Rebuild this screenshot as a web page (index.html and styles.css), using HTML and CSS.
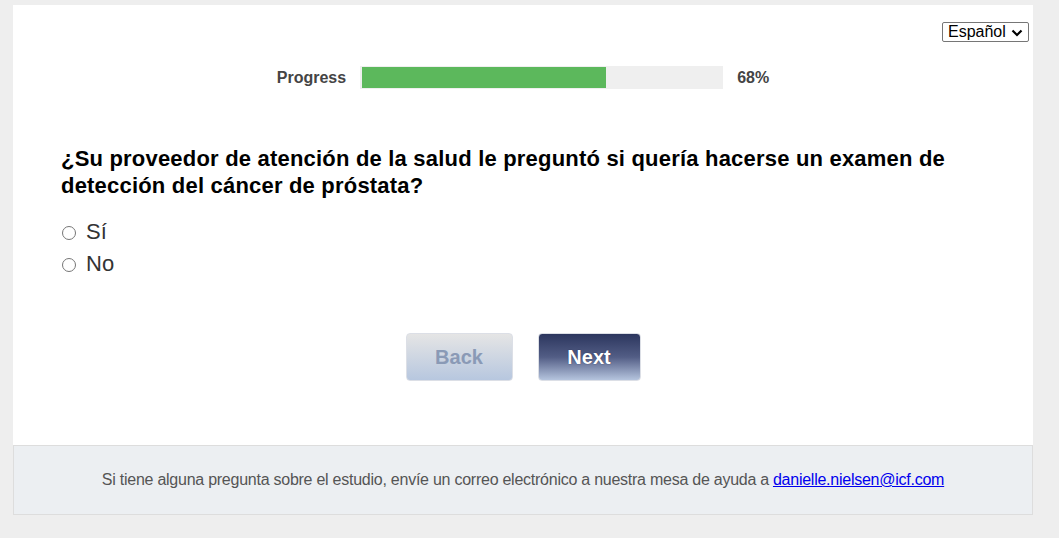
FILE: index.html
```html
<!DOCTYPE html>
<html lang="es">
<head>
<meta charset="UTF-8">
<meta name="viewport" content="width=device-width, initial-scale=1.0">
<title>Encuesta</title>
<link rel="stylesheet" href="styles.css">
</head>
<body>

<div class="survey">
  <div class="lang-row">
    <div class="lang-wrap">
      <select class="lang" name="lang">
        <option value="es">Español</option>
        <option value="en">English</option>
      </select>
      <svg class="lang-arrow" width="12" height="8" viewBox="0 0 12 8"><path d="M1.5 1.5 6 6 10.5 1.5" fill="none" stroke="#000" stroke-width="2.2"/></svg>
    </div>
  </div>

  <div class="progress">
    <span class="progress-label">Progress</span>
    <div class="progress-track">
      <div class="progress-fill" style="width: 68%"></div>
    </div>
    <span class="progress-label">68%</span>
  </div>

  <form class="question">
    <h2>¿Su proveedor de atención de la salud le preguntó si quería hacerse un examen de detección del cáncer de próstata?</h2>
    <label class="option"><input type="radio" name="q1" value="1"> Sí</label>
    <label class="option"><input type="radio" name="q1" value="2"> No</label>

    <div class="buttons">
      <button type="button" class="btn btn-back">Back</button>
      <button type="submit" class="btn btn-next">Next</button>
    </div>
  </form>
</div>

<div class="footer">
  Si tiene alguna pregunta sobre el estudio, envíe un correo electrónico a nuestra mesa de ayuda a <a href="mailto:danielle.nielsen@icf.com">danielle.nielsen@icf.com</a>
</div>

</body>
</html>
```

FILE: styles.css
```css
body {
  font-family: "Liberation Sans", Arial, sans-serif;
  margin: 0;
  padding: 5px 0 0 13px;
  background-color: #eeeeee;
}
.survey {
  width: 1020px;
  background-color: #fff;
  padding: 17px 0 64px;
  box-sizing: border-box;
}
.lang-row {
  display: flex;
  justify-content: flex-end;
  padding-right: 4px;
}
.lang-wrap {
  position: relative;
  height: 20px;
}
.lang {
  -webkit-appearance: none;
  appearance: none;
  font-family: "Liberation Sans", Arial, sans-serif;
  font-size: 16px;
  height: 20px;
  width: 87px;
  padding: 0 0 0 5px;
  border: 1px solid #767676;
  border-radius: 2px;
  background: #fff;
  color: #000;
  line-height: 18px;
}
.lang-arrow {
  position: absolute;
  right: 6px;
  top: 7px;
  pointer-events: none;
}
.progress {
  display: flex;
  justify-content: center;
  align-items: center;
  gap: 14px;
  margin-top: 24px;
}
.progress-label {
  font-size: 16px;
  font-weight: bold;
  color: #444;
}
.progress-track {
  width: 363px;
  height: 23px;
  background-color: #efefef;
  padding: 1px 2px;
  box-sizing: border-box;
}
.progress-fill {
  height: 100%;
  background-color: #5cb85c;
}
.question {
  margin: 56px 0 0;
  padding-left: 48px;
}
.question h2 {
  font-size: 22px;
  line-height: 27px;
  letter-spacing: 0.2px;
  margin: 0 0 17px;
  color: #000;
  padding-right: 40px;
}
.option {
  display: flex;
  align-items: center;
  height: 32px;
  font-size: 22px;
  color: #333;
}
.option input {
  width: 14px;
  height: 14px;
  margin: 1px 10px 0 1px;
}
.buttons {
  display: flex;
  justify-content: center;
  gap: 25px;
  margin: 53px 48px 0 0;
}
.btn {
  height: 48px;
  border: 1px solid #dcdfe6;
  border-radius: 4px;
  font-family: "Liberation Sans", Arial, sans-serif;
  font-size: 20px;
  font-weight: bold;
}
.btn-back {
  width: 107px;
  color: #8a9ab6;
  background: linear-gradient(#e5e5e5, #b7c7df);
}
.btn-next {
  width: 103px;
  color: #fff;
  background: linear-gradient(#2c365e, #525d85 50%, #b5c4de);
  text-shadow: 0 0 1px #1a2040;
}
.footer {
  width: 1020px;
  height: 70px;
  box-sizing: border-box;
  background-color: #eceff2;
  border: 1px solid #dddddd;
  display: flex;
  justify-content: center;
  align-items: center;
  font-family: "Liberation Sans", Arial, sans-serif;
  font-size: 16px;
  letter-spacing: -0.25px;
  color: #555;
}
.footer a {
  color: #0000ee;
  margin-left: 4px;
}
```
